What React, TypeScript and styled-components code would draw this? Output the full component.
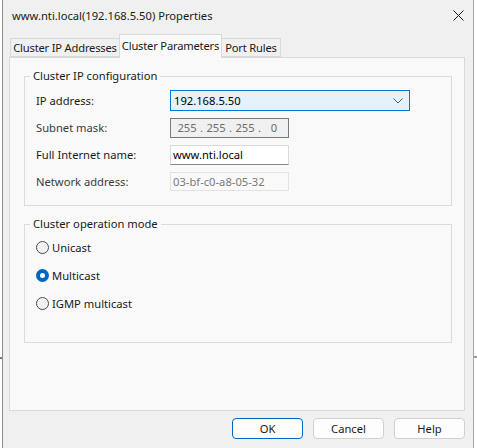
import React from "react";
import styled, { createGlobalStyle } from "styled-components";

const Global = createGlobalStyle`
  html, body { margin: 0; padding: 0; }
  body {
    font-family: "Noto Sans", "Open Sans", Arial, sans-serif;
    font-size: 11.2px;
    color: #000;
    background:
      linear-gradient(#7a7a7a, #7a7a7a) 0 357px / 2px 2px no-repeat,
      linear-gradient(#9a9a9a, #9a9a9a) 474px 356px / 3px 2px no-repeat,
      #ffffff;
    min-height: 448px;
  }
  * { box-sizing: border-box; }
`;

const Window = styled.div`
  margin-left: 2px;
  width: 472px;
  height: 448px;
  background: #f0f0f0;
  border-left: 1px solid #8e8e8e;
  border-right: 1px solid #a8a8a8;
  display: flex;
  flex-direction: column;
`;

const TitleBar = styled.div`
  height: 30px;
  display: flex;
  align-items: center;
  justify-content: space-between;
  padding: 0 9px 0 9px;
  color: #1a1a1a;
`;

const CloseBtn = styled.div`
  width: 12px;
  height: 12px;
  display: flex;
  align-items: center;
  justify-content: center;
`;

const Body = styled.div`
  padding: 4px 8px 0 6px;
  display: flex;
  flex-direction: column;
`;

const TabRow = styled.div`
  display: flex;
  align-items: flex-end;
  padding-left: 1px;
  height: 23px;
`;

const Tab = styled.div<{ $active?: boolean; $w: number }>`
  width: ${(p) => p.$w}px;
  height: ${(p) => (p.$active ? 24 : 19)}px;
  margin-bottom: ${(p) => (p.$active ? -1 : 0)}px;
  position: relative;
  z-index: ${(p) => (p.$active ? 2 : 1)};
  background: ${(p) => (p.$active ? "#f9f9f9" : "#f0f0f0")};
  border: 1px solid #d9d9d9;
  border-bottom: ${(p) => (p.$active ? "none" : "1px solid #d9d9d9")};
  margin-right: -1px;
  display: flex;
  align-items: ${(p) => (p.$active ? "flex-start" : "center")};
  padding-top: ${(p) => (p.$active ? 3 : 0)}px;
  justify-content: center;
  color: #1a1a1a;
  letter-spacing: -0.2px;
  white-space: nowrap;
`;

const Panel = styled.div`
  height: 354px;
  background: #f9f9f9;
  border: 1px solid #d9d9d9;
  padding: 18px 12px 0 14px;
  display: flex;
  flex-direction: column;
  gap: 18px;
`;

const Group = styled.div<{ $h: number }>`
  position: relative;
  height: ${(p) => p.$h}px;
  border: 1px solid #dcdcdc;
`;

const Legend = styled.span`
  position: absolute;
  top: -9px;
  left: 5px;
  padding: 0 3px;
  background: #f9f9f9;
  line-height: 16px;
  color: #1a1a1a;
`;

const FieldGrid = styled.div`
  display: grid;
  grid-template-columns: 134px 1fr;
  grid-auto-rows: 21px;
  row-gap: 6px;
  padding: 13px 0 0 11px;
  align-items: center;
`;

const Label = styled.span<{ $dim?: boolean }>`
  color: ${(p) => (p.$dim ? "#3a3a3a" : "#1a1a1a")};
`;

const Combo = styled.div`
  width: 240px;
  height: 21px;
  background: #e5f1fb;
  border: 1px solid #0078d7;
  display: flex;
  align-items: center;
  justify-content: space-between;
  padding: 0 6px 0 3px;
  color: #000;
`;

const IpBox = styled.div`
  width: 119px;
  height: 20px;
  background: #f0f0f0;
  border: 1px solid #7a7a7a;
  display: flex;
  align-items: center;
  padding-left: 4px;
  color: #6d6d6d;
`;

const IpSeg = styled.span`
  width: 24px;
  text-align: center;
`;

const IpDot = styled.span`
  width: 5px;
  text-align: center;
`;

const TextBox = styled.div<{ $disabled?: boolean }>`
  width: 119px;
  height: ${(p) => (p.$disabled ? 19 : 20)}px;
  background: ${(p) => (p.$disabled ? "#f9f9f9" : "#ffffff")};
  border: 1px solid ${(p) => (p.$disabled ? "#e3e3e3" : "#dadada")};
  border-bottom-color: ${(p) => (p.$disabled ? "#e3e3e3" : "#868686")};
  color: ${(p) => (p.$disabled ? "#7a7a7a" : "#000")};
  display: flex;
  align-items: center;
  padding-left: 2px;
`;

const RadioList = styled.div`
  display: flex;
  flex-direction: column;
  padding: 8px 0 0 11px;
`;

const RadioRow = styled.div`
  height: 28px;
  display: flex;
  align-items: center;
  gap: 3px;
  color: #1a1a1a;
`;

const RadioCircle = styled.span<{ $checked?: boolean }>`
  width: 13px;
  height: 13px;
  border-radius: 50%;
  border: ${(p) => (p.$checked ? "none" : "1px solid #4a4a4a")};
  background: ${(p) => (p.$checked ? "#0067c0" : "#f3f3f3")};
  display: flex;
  align-items: center;
  justify-content: center;
  &::after {
    content: "";
    display: ${(p) => (p.$checked ? "block" : "none")};
    width: 5px;
    height: 5px;
    border-radius: 50%;
    background: #ffffff;
  }
`;

const ButtonRow = styled.div`
  display: flex;
  justify-content: flex-end;
  gap: 10px;
  padding-top: 7px;
`;

const Button = styled.div<{ $primary?: boolean }>`
  width: 71px;
  height: 21px;
  border-radius: 4px;
  background: #fdfdfd;
  border: 1px solid ${(p) => (p.$primary ? "#0067c0" : "#d0d0d0")};
  display: flex;
  align-items: center;
  justify-content: center;
  color: #1a1a1a;
`;

export default function App() {
  return (
    <>
      <Global />
      <Window>
        <TitleBar>
          <span>www.nti.local(192.168.5.50) Properties</span>
          <CloseBtn>
            <svg width="11" height="11" viewBox="0 0 11 11">
              <path d="M0.5 0.5 L10.5 10.5 M10.5 0.5 L0.5 10.5" stroke="#1a1a1a" strokeWidth="1" />
            </svg>
          </CloseBtn>
        </TitleBar>
        <Body>
          <TabRow>
            <Tab $w={110}>Cluster IP Addresses</Tab>
            <Tab $active $w={103}>Cluster Parameters</Tab>
            <Tab $w={60}>Port Rules</Tab>
          </TabRow>
          <Panel>
            <Group $h={130}>
              <Legend>Cluster IP configuration</Legend>
              <FieldGrid>
                <Label>IP address:</Label>
                <Combo>
                  <span>192.168.5.50</span>
                  <svg width="10" height="6" viewBox="0 0 10 6">
                    <path d="M0.5 0.5 L5 5 L9.5 0.5" fill="none" stroke="#5a5a5a" strokeWidth="1" />
                  </svg>
                </Combo>
                <Label $dim>Subnet mask:</Label>
                <IpBox>
                  <IpSeg>255</IpSeg>
                  <IpDot>.</IpDot>
                  <IpSeg>255</IpSeg>
                  <IpDot>.</IpDot>
                  <IpSeg>255</IpSeg>
                  <IpDot>.</IpDot>
                  <IpSeg>0</IpSeg>
                </IpBox>
                <Label>Full Internet name:</Label>
                <TextBox>www.nti.local</TextBox>
                <Label $dim>Network address:</Label>
                <TextBox $disabled>03-bf-c0-a8-05-32</TextBox>
              </FieldGrid>
            </Group>
            <Group $h={119}>
              <Legend>Cluster operation mode</Legend>
              <RadioList>
                <RadioRow>
                  <RadioCircle />
                  <span>Unicast</span>
                </RadioRow>
                <RadioRow>
                  <RadioCircle $checked />
                  <span>Multicast</span>
                </RadioRow>
                <RadioRow>
                  <RadioCircle />
                  <span>IGMP multicast</span>
                </RadioRow>
              </RadioList>
            </Group>
          </Panel>
          <ButtonRow>
            <Button $primary>OK</Button>
            <Button>Cancel</Button>
            <Button>Help</Button>
          </ButtonRow>
        </Body>
      </Window>
    </>
  );
}
